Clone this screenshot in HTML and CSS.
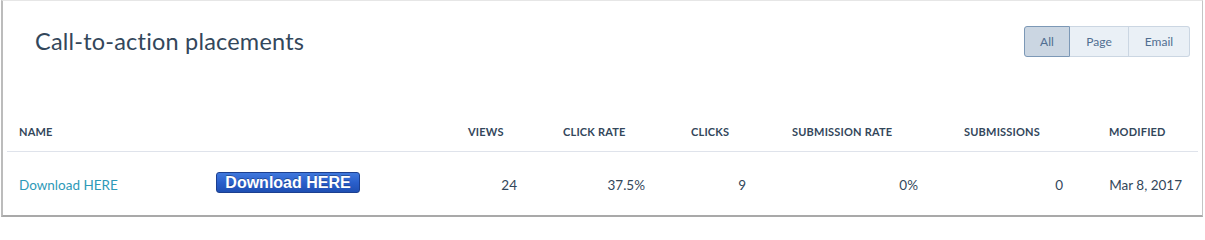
FILE: index.html
```html
<!DOCTYPE html>
<html>
<head>
<meta charset="utf-8">
<link rel="stylesheet" href="styles.css">
</head>
<body>
<div class="card">
  <div class="top">
    <h1 class="title">Call-to-action placements</h1>
    <div class="seg">
      <button class="seg-btn active">All</button>
      <button class="seg-btn">Page</button>
      <button class="seg-btn">Email</button>
    </div>
  </div>
  <div class="table">
    <div class="row head">
      <div class="c c-name">NAME</div>
      <div class="c c-prev"></div>
      <div class="c">VIEWS</div>
      <div class="c">CLICK RATE</div>
      <div class="c">CLICKS</div>
      <div class="c">SUBMISSION RATE</div>
      <div class="c">SUBMISSIONS</div>
      <div class="c">MODIFIED</div>
    </div>
    <div class="row body">
      <div class="c c-name"><a class="link" href="#">Download HERE</a></div>
      <div class="c c-prev"><span class="cta">Download HERE</span></div>
      <div class="c num">24</div>
      <div class="c num">37.5%</div>
      <div class="c num">9</div>
      <div class="c num">0%</div>
      <div class="c num">0</div>
      <div class="c num">Mar 8, 2017</div>
    </div>
  </div>
</div>
</body>
</html>
```
FILE: styles.css
```css
html, body {
  margin: 0;
  padding: 0;
  background: #fff;
}
body {
  font-family: Lato, "Open Sans", sans-serif;
  color: #33475b;
}
.card {
  margin-left: 1px;
  width: 1202px;
  height: 217px;
  border-top: 1px solid #e6e6e6;
  border-left: 2px solid #bcbcbc;
  border-right: 1px solid #c4c4c4;
  border-bottom: 2px solid #a9a9a9;
  box-sizing: border-box;
  background: #fff;
}
.top {
  display: flex;
  justify-content: space-between;
  align-items: flex-start;
  padding: 0 12px 0 32px;
}
.title {
  margin: 24px 0 0 0;
  font-size: 23.5px;
  font-weight: 400;
  line-height: 32px;
  color: #33475b;
  letter-spacing: 0.2px;
}
.seg {
  display: flex;
  margin-top: 25px;
}
.seg-btn {
  font-family: Lato, "Open Sans", sans-serif;
  font-size: 12px;
  color: #506e91;
  background: #eaf0f6;
  border: 1px solid #cbd6e2;
  border-left: none;
  height: 31px;
  padding: 0;
  margin: 0;
  width: 59px;
}
.seg-btn:first-child {
  border-left: 1px solid #cbd6e2;
  border-radius: 3px 0 0 3px;
}
.seg-btn:last-child {
  border-radius: 0 3px 3px 0;
  width: 61px;
}
.seg-btn.active {
  background: #cbd6e2;
  border: 1px solid #7c98b6;
  width: 46px;
}
.table {
  margin: 55px 0 0 4px;
  width: 1191px;
}
.row {
  display: grid;
  grid-template-columns: 179px 252px 95px 128px 101px 172px 145px 119px;
}
.head {
  height: 39px;
  align-items: center;
  border-bottom: 1px solid #dfe3eb;
  font-size: 11px;
  font-weight: 700;
  letter-spacing: 0.2px;
  color: #33475b;
}
.body {
  height: 65px;
  align-items: center;
  padding-bottom: 3px;
  font-size: 13.5px;
}
.c {
  padding: 0 16px 0 30px;
  white-space: nowrap;
}
.c-name {
  padding-left: 12px;
}
.body .c-prev {
  padding-bottom: 4px;
}
.num {
  text-align: right;
}
.link {
  color: #2e9ab8;
  text-decoration: none;
}
.cta {
  display: inline-block;
  width: 144px;
  height: 21px;
  box-sizing: border-box;
  border: 1px solid #1c3f8f;
  border-radius: 3px;
  background: linear-gradient(#3f78dd, #2a5fcb 50%, #1f4fb3);
  color: #fff;
  font-family: "Liberation Sans", Arial, sans-serif;
  font-weight: 700;
  font-size: 16px;
  line-height: 19px;
  text-align: center;
  text-shadow: 0 -1px 0 rgba(0,0,0,0.3);
}
```
